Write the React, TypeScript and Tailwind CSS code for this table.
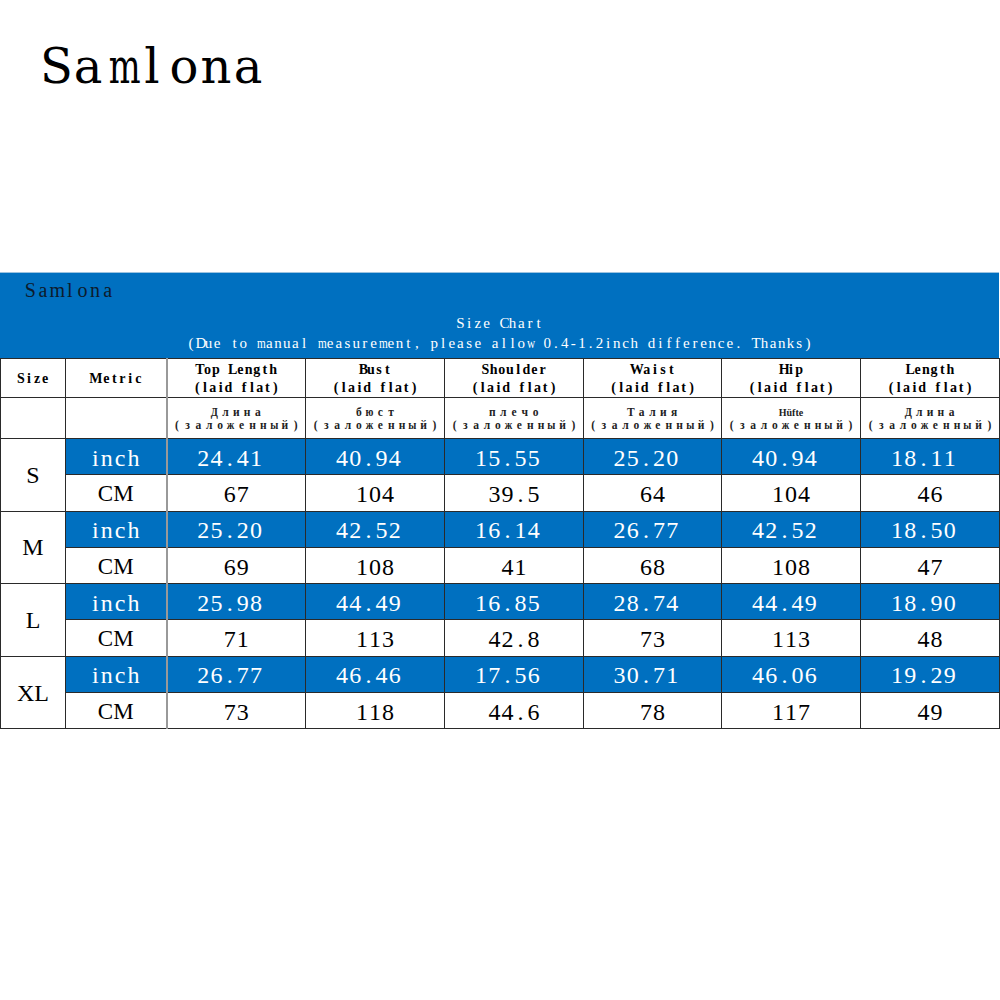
import React from "react";

const heads = ["Top Length", "Bust", "Shoulder", "Waist", "Hip", "Length"];
const rus = ["Длина", "бюст", "плечо", "Талия", "Hüfte", "Длина"];
const data: { size: string; inch: string[]; cm: string[] }[] = [
  { size: "S", inch: ["24.41", "40.94", "15.55", "25.20", "40.94", "18.11"], cm: ["67", "104", "39.5", "64", "104", "46"] },
  { size: "M", inch: ["25.20", "42.52", "16.14", "26.77", "42.52", "18.50"], cm: ["69", "108", "41", "68", "108", "47"] },
  { size: "L", inch: ["25.98", "44.49", "16.85", "28.74", "44.49", "18.90"], cm: ["71", "113", "42.8", "73", "113", "48"] },
  { size: "XL", inch: ["26.77", "46.46", "17.56", "30.71", "46.06", "19.29"], cm: ["73", "118", "44.6", "78", "117", "49"] },
];

const serif = { fontFamily: '"Liberation Serif", "DejaVu Serif", serif' };
const dv = { fontFamily: '"DejaVu Serif", "Liberation Serif", serif' };

function M({ t, cw, sq = "scale-x-75", wc }: { t: string; cw: string; sq?: string; wc?: string }) {
  return (
    <span className="inline-flex justify-center whitespace-nowrap">
      {Array.from(t).map((c, i) => {
        const wide = "MWmwжшщюыДЖШЩ".includes(c);
        const cls = wide ? (wc ? wc : cw + " " + sq) : cw;
        return (
          <span key={i} className={"inline-block text-center " + cls}>
            {c === " " ? "\u00a0" : c}
          </span>
        );
      })}
    </span>
  );
}

export default function App() {
  return (
    <div className="w-[1000px] h-[1000px] bg-white overflow-hidden" style={serif}>
      <div className="h-[272px] pl-[40px] pt-[38px]">
        <div className="text-[48px] leading-[56px] text-black" style={dv}>
          <M t="Samlona" cw="w-[32px]" sq="scale-x-[0.7]" />
        </div>
      </div>
      <div className="w-[999px]">
        <div className="h-[86px] bg-[#0070c0] border-t border-[#9cc3e0] flex flex-col">
          <div className="pl-[24px] pt-[4px] text-[20px] leading-[26px] text-[#0d1b2c]">
            <M t="Samlona" cw="w-[12.7px]" wc="w-[14px]" />
          </div>
          <div className="mt-[10px] text-center text-white text-[15px] leading-[20px]">
            <M t="Size Chart" cw="w-[8.7px]" />
          </div>
          <div className="text-center text-white text-[15px] leading-[20px]">
            <M t="(Due to manual measurement, please allow 0.4-1.2inch difference. Thanks)" cw="w-[8.7px]" />
          </div>
        </div>
        <table className="table-fixed border-collapse w-[999px]">
          <colgroup>
            <col className="w-[65px]" />
            <col className="w-[101px]" />
            <col className="w-[139px]" />
            <col className="w-[139px]" />
            <col className="w-[139px]" />
            <col className="w-[138px]" />
            <col className="w-[139px]" />
            <col className="w-[139px]" />
          </colgroup>
          <tbody>
            <tr className="h-[39px]">
              <td className="border border-[#2a2a2a] text-center text-[14px] font-bold leading-[18px] pt-[2px]">
                <M t="Size" cw="w-[8px]" />
              </td>
              <td className="border border-[#2a2a2a] border-r-2 border-r-[#999] text-center text-[14px] font-bold leading-[18px] pt-[2px]">
                <M t="Metric" cw="w-[8px]" wc="w-[13px]" />
              </td>
              {heads.map((h, i) => (
                <td key={i} className="border border-[#2a2a2a] text-center text-[14px] font-bold leading-[18px] pt-[2px]">
                  <div>
                    <M t={h} cw="w-[8.2px]" wc="w-[13px]" />
                  </div>
                  <div>
                    <M t="(laid flat)" cw="w-[7.8px]" />
                  </div>
                </td>
              ))}
            </tr>
            <tr className="h-[41px]">
              <td className="border border-[#2a2a2a]"></td>
              <td className="border border-[#2a2a2a] border-r-2 border-r-[#999]"></td>
              {rus.map((r, i) => (
                <td key={i} className="border border-[#2a2a2a] text-center text-[11.5px] leading-[13px] text-[#222] align-bottom pb-[6px] font-bold">
                  {r === "Hüfte" ? (
                    <div className="text-[10px]">{r}</div>
                  ) : (
                    <div>
                      <M t={r} cw="w-[10.8px]" sq="scale-x-90" />
                    </div>
                  )}
                  <div>
                    <M t="(заложенный)" cw="w-[10.8px]" sq="scale-x-90" />
                  </div>
                </td>
              ))}
            </tr>
            {data.map((d) => (
              <React.Fragment key={d.size}>
                <tr className="h-[36.3px]">
                  <td rowSpan={2} className="border border-[#2a2a2a] text-center text-[24px] text-black">
                    {d.size}
                  </td>
                  <td className="border border-[#2a2a2a] border-r-2 border-r-[#999] bg-[#0070c0] text-center text-white text-[24px] tracking-[2px] pl-[2px] leading-[28px] pt-[2px]">
                    inch
                  </td>
                  {d.inch.map((v, i) => (
                    <td key={i} className="border border-[#2a2a2a] bg-[#0070c0] text-center text-white text-[24px] leading-[28px] pt-[2px]">
                      <M t={v + " "} cw="w-[13.2px]" />
                    </td>
                  ))}
                </tr>
                <tr className="h-[36.3px]">
                  <td className="border border-[#2a2a2a] border-r-2 border-r-[#999] text-center text-black text-[23px] leading-[28px] pt-[2px]">
                    CM
                  </td>
                  {d.cm.map((v, i) => (
                    <td key={i} className="border border-[#2a2a2a] text-center text-black text-[24px] leading-[28px] pt-[2px]">
                      <M t={v} cw="w-[13px]" />
                    </td>
                  ))}
                </tr>
              </React.Fragment>
            ))}
          </tbody>
        </table>
      </div>
    </div>
  );
}
